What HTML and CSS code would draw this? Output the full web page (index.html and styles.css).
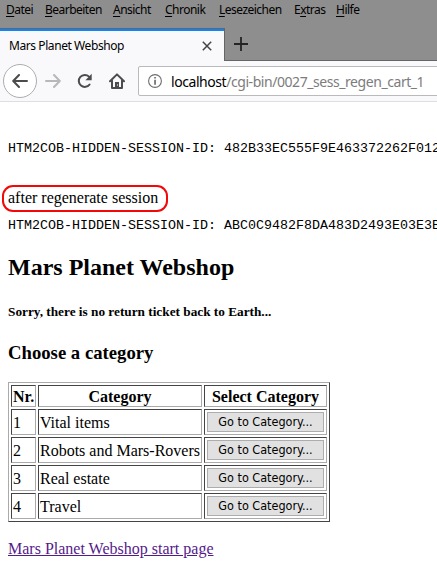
FILE: index.html
```html
<!DOCTYPE html>
<html lang="de">
<head>
<meta charset="utf-8">
<title>Mars Planet Webshop</title>
<link rel="stylesheet" href="styles.css">
</head>
<body>
<header class="browser">
  <nav class="menu">
    <span><u>D</u>atei</span><span><u>B</u>earbeiten</span><span><u>A</u>nsicht</span><span><u>C</u>hronik</span><span><u>L</u>esezeichen</span><span>E<u>x</u>tras</span><span><u>H</u>ilfe</span>
  </nav>
  <div class="tabs">
    <div class="tab">
      <span class="tab-title">Mars Planet Webshop</span>
      <svg class="close" width="10" height="10" viewBox="0 0 10 10"><path d="M.8.8l8.4 8.4M9.2.8L.8 9.2" fill="none" stroke="#444" stroke-width="1.5"/></svg>
    </div>
    <svg class="plus" width="14" height="14" viewBox="0 0 14 14"><path d="M7 0v14M0 7h14" fill="none" stroke="#242424" stroke-width="1.8"/></svg>
  </div>
  <div class="toolbar">
    <span class="back"><svg width="16" height="14" viewBox="0 0 16 14"><path d="M15 7H1.5M7 1L1.2 7 7 13" fill="none" stroke="#4c4c4e" stroke-width="2" stroke-linecap="round" stroke-linejoin="round"/></svg></span>
    <svg class="forward" width="16" height="14" viewBox="0 0 16 14"><path d="M1 7h13.5M9 1l5.8 6L9 13" fill="none" stroke="#b8b8ba" stroke-width="2" stroke-linecap="round" stroke-linejoin="round"/></svg>
    <svg class="reload" width="16" height="16" viewBox="0 0 16 16"><path d="M12.6 11.5A6 6 0 1 1 12 3.6" fill="none" stroke="#4c4c4e" stroke-width="2" stroke-linecap="round"/><path d="M14.7.8v6.4H8.4z" fill="#4c4c4e"/></svg>
    <svg class="home" width="16" height="16" viewBox="0 0 16 16"><path d="M1 8.3L8 1.4l7 6.9M3 7.5V15h10V7.5" fill="none" stroke="#4c4c4e" stroke-width="2" stroke-linecap="round" stroke-linejoin="round"/><path d="M6 9h4v6H6z" fill="#4c4c4e"/><path d="M8 11.5h1v1H8z" fill="#fff"/></svg>
    <div class="address">
      <svg width="14" height="14" viewBox="0 0 14 14"><circle cx="7" cy="7" r="6.4" fill="none" stroke="#6e6e70" stroke-width="1.1"/><path d="M6.2 3h1.7v1.6H6.2zM6.2 5.8h1.7v5H6.2z" fill="#6e6e70"/></svg>
      <span class="url"><b>localhost</b>/cgi-bin/0027_sess_regen_cart_1</span>
    </div>
  </div>
</header>
<main class="page">
  <pre class="session">HTM2COB-HIDDEN-SESSION-ID: 482B33EC555F9E463372262F012</pre>
  <p class="marked">after regenerate session</p>
  <pre class="session second">HTM2COB-HIDDEN-SESSION-ID: ABC0C9482F8DA483D2493E03E3B</pre>
  <h2>Mars Planet Webshop</h2>
  <h5>Sorry, there is no return ticket back to Earth...</h5>
  <h3>Choose a category</h3>
  <table>
    <colgroup><col class="nr"><col class="category"><col class="select"></colgroup>
    <tr><th>Nr.</th><th>Category</th><th>Select Category</th></tr>
    <tr><td>1</td><td>Vital items</td><td class="action"><button>Go to Category...</button></td></tr>
    <tr><td>2</td><td>Robots and Mars-Rovers</td><td class="action"><button>Go to Category...</button></td></tr>
    <tr><td>3</td><td>Real estate</td><td class="action"><button>Go to Category...</button></td></tr>
    <tr><td>4</td><td>Travel</td><td class="action"><button>Go to Category...</button></td></tr>
  </table>
  <a class="start" href="#">Mars Planet Webshop start page</a>
</main>
</body>
</html>
```
FILE: styles.css
```css
* { box-sizing: border-box; }
body {
  margin: 0;
  background: #fff;
  color: #000;
  font: 16px/18px "Liberation Serif", serif;
  overflow: hidden;
}
svg { display: block; flex: none; }
.browser {
  height: 102px;
  font-family: "Noto Sans", sans-serif;
  background: #8e8e8e;
}
.menu {
  display: grid;
  grid-template-columns: 39px 68px 52px 54px 75px 42px 60px;
  height: 28px;
  padding: 2px 0 0 6px;
  font-size: 12px;
  line-height: 16px;
  letter-spacing: -0.52px;
  white-space: nowrap;
}
.menu u { text-underline-offset: 2px; }
.tabs { display: flex; height: 33px; border-bottom: 1px solid #656565; }
.tab {
  display: flex;
  align-items: center;
  justify-content: space-between;
  width: 225px;
  height: 33px;
  padding: 2px 12px 0 9px;
  border-top: 1px solid #656565;
  border-right: 1px solid #656565;
  background: linear-gradient(#0a84ff 2px, #f9f9fb 2px);
}
.tab-title { font-size: 12px; letter-spacing: -0.42px; white-space: nowrap; }
.close { margin-top: -1px; }
.plus { margin: 9px 0 0 9px; }
.toolbar {
  display: flex;
  align-items: center;
  height: 41px;
  padding: 0 0 1px 3px;
  border-bottom: 1px solid #dedee0;
  background: #f9f9fb;
}
.back {
  display: flex;
  align-items: center;
  justify-content: center;
  flex: none;
  width: 34px;
  height: 34px;
  border: 1px solid #adadaf;
  border-radius: 50%;
  background: #fff;
}
.forward { margin-left: 8px; }
.reload { margin-left: 16px; }
.home { margin-left: 16px; }
.address {
  display: flex;
  align-items: center;
  width: 320px;
  height: 30px;
  margin-left: 13px;
  padding-left: 9px;
  flex: none;
  border: 1px solid #bababc;
  border-radius: 2px;
  background: #fff;
}
.url {
  margin-left: 9px;
  padding-top: 2px;
  color: #7c7c7c;
  font-size: 14px;
  letter-spacing: -0.44px;
  white-space: nowrap;
}
.url b { color: #000; font-weight: 400; }
.page { padding: 39px 0 0 8px; }
.session {
  height: 16px;
  margin: 0;
  font: 13.333px/16px "Liberation Mono", monospace;
  white-space: pre;
}
.marked {
  width: 166px;
  height: 27px;
  margin: 28px 0 0 -6px;
  padding-left: 4px;
  border: 2px solid #f20808;
  border-radius: 11px;
  line-height: 21px;
}
.second { margin-top: 6px; }
h2, h5, h3 { margin: 0; font-weight: 700; }
h2 { margin-top: 19px; font-size: 24px; line-height: 28px; }
h5 { margin-top: 23px; font-size: 13.28px; line-height: 16px; }
h3 { margin-top: 22px; font-size: 18.72px; line-height: 22px; }
table {
  width: 322px;
  margin-top: 18px;
  border: 1px solid;
  border-color: #aaa #444 #444 #aaa;
  border-spacing: 2px;
  table-layout: fixed;
}
.nr { width: 25px; }
.category { width: 164px; }
.select { width: 123px; }
th, td {
  height: 26px;
  padding: 2px 1px 0;
  border: 1px solid;
  border-color: #444 #aaa #aaa #444;
  white-space: nowrap;
}
th { height: 22px; }
.action { padding: 1px; }
button {
  display: block;
  width: 117px;
  height: 20px;
  margin: 0 0 0 1px;
  padding: 0;
  border: 1px solid #adadad;
  background: #e1e1e1;
  color: #000;
  font: 12.5px/18px "DejaVu Sans Condensed", "DejaVu Sans", sans-serif;
  font-stretch: condensed;
  white-space: nowrap;
}
.start {
  display: inline-block;
  margin-top: 18px;
  color: #551a8b;
}
```
